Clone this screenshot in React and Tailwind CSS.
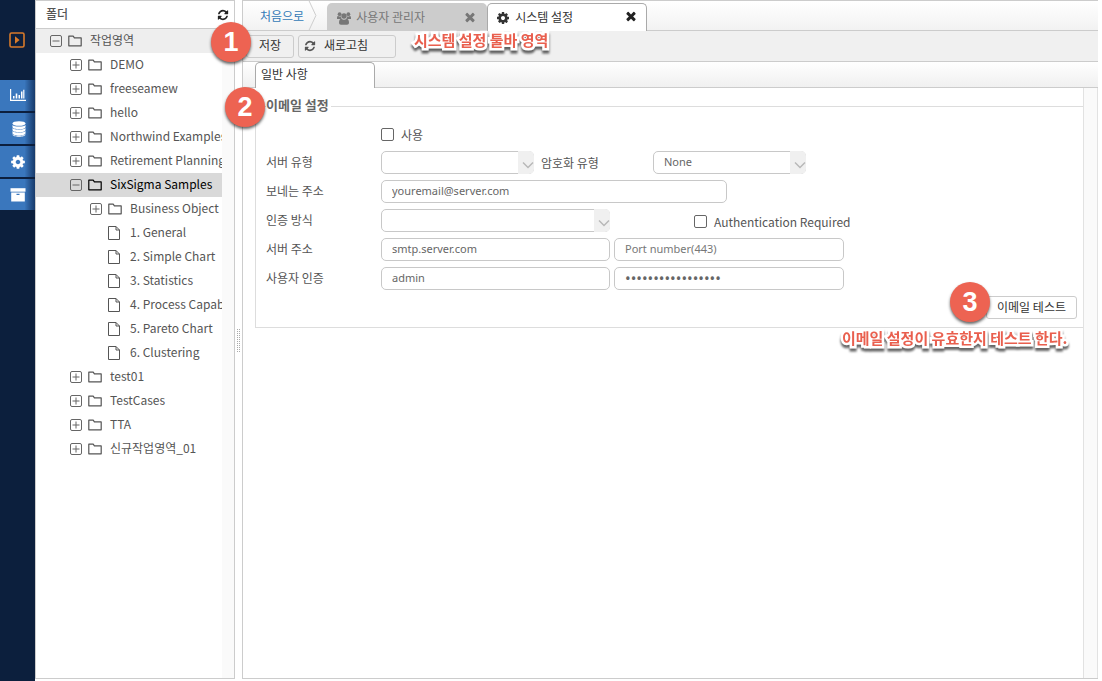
import React from "react";

function RefreshIcon({ className }) {
  return (
    <svg viewBox="0 0 1792 1792" fill="currentColor" className={className} aria-hidden="true">
      <path d="M1639 1056q0 5-1 7-64 268-268 434.5t-478 166.5q-146 0-282.5-55t-243.5-157l-129 129q-19 19-45 19t-45-19-19-45v-448q0-26 19-45t45-19h448q26 0 45 19t19 45-19 45l-137 137q71 66 161 102t187 36q134 0 250-65t186-179q11-17 53-117 8-23 30-23h192q13 0 22.5 9.5t9.5 22.5zm25-800v448q0 26-19 45t-45 19h-448q-26 0-45-19t-19-45 19-45l138-138q-148-137-349-137-134 0-250 65t-186 179q-11 17-53 117-8 23-30 23h-199q-13 0-22.5-9.5t-9.5-22.5v-7q65-268 270-434.5t480-166.5q146 0 284 55.5t245 156.5l130-129q19-19 45-19t45 19 19 45z" />
    </svg>
  );
}

function GearIcon({ className }) {
  return (
    <svg viewBox="-128 0 1792 1792" fill="currentColor" className={className} aria-hidden="true">
      <path d="M1024 896q0-106-75-181t-181-75-181 75-75 181 75 181 181 75 181-75 75-181zm512-109v222q0 12-8 23t-20 13l-185 28q-19 54-39 91 35 50 107 138 10 12 10 25t-9 23q-27 37-99 108t-94 71q-12 0-26-9l-138-108q-44 23-91 38-16 136-29 186-7 28-36 28h-222q-14 0-24.5-8.5t-11.5-21.5l-28-184q-49-16-90-37l-141 107q-10 9-25 9-14 0-25-11-126-114-165-168-7-10-7-23 0-12 8-23 15-21 51-66.5t54-70.5q-27-50-41-99l-183-27q-13-2-21-12.5t-8-23.5v-222q0-12 8-23t19-13l186-28q14-46 39-92-40-57-107-138-10-12-10-24 0-10 9-23 26-36 98.5-107.5t94.5-71.5q13 0 26 10l138 107q44-23 91-38 16-136 29-186 7-28 36-28h222q14 0 24.5 8.5t11.5 21.5l28 184q49 16 90 37l142-107q9-9 24-9 13 0 25 10 129 119 165 170 7 8 7 22 0 12-8 23-15 21-51 66.5t-54 70.5q26 50 41 98l183 28q13 2 21 12.5t8 23.5z" />
    </svg>
  );
}

function CloseIcon() {
  return (
    <svg viewBox="0 0 1792 1792" fill="currentColor" className="size-3.5" aria-hidden="true">
      <path d="M1490 1322q0 40-28 68l-136 136q-28 28-68 28t-68-28l-294-294-294 294q-28 28-68 28t-68-28l-136-136q-28-28-28-68t28-68l294-294-294-294q-28-28-28-68t28-68l136-136q28-28 68-28t68 28l294 294 294-294q28-28 68-28t68 28l136 136q28 28 28 68t-28 68l-294 294 294 294q28 28 28 68z" />
    </svg>
  );
}

function UsersIcon() {
  return (
    <svg viewBox="0 0 14 13" fill="currentColor" className="mt-1 h-[13px] w-3.5" aria-hidden="true">
      <circle cx="2.6" cy="2.2" r="1.900" />
      <circle cx="11.4" cy="2.2" r="1.900" />
      <circle cx="7" cy="4" r="2.700" />
      <path d="M0 7V5.800C0 4.300.800 4 1.300 4c.700.700 1.700.700 2.500.300C3.800 5.600 4.200 6.300 4.800 7zM14 7V5.800C14 4.300 13.200 4 12.700 4c-.700.700-1.700.700-2.500.300C10.200 5.600 9.800 6.300 9.200 7z" />
      <path d="M2 10.600C2 8 3 6.700 4.400 6.700c1.600 1.300 3.600 1.300 5.200 0C11 6.700 12 8 12 10.600c0 1.500-.800 2.200-2 2.200H4c-1.200 0-2-.700-2-2.200z" />
    </svg>
  );
}

function PlayIcon() {
  return (
    <svg viewBox="0 0 16 16" className="mr-px size-4 text-[#d87a2a]" aria-hidden="true">
      <rect x="1" y="1" width="14" height="14" rx="1.5" fill="none" stroke="currentColor" strokeWidth="1.6" />
      <path d="M6 4.2v7.6L10.6 8z" fill="currentColor" />
    </svg>
  );
}

function ChartIcon() {
  return (
    <svg viewBox="0 0 16 14" fill="currentColor" className="mb-0.5 h-3.5 w-4" aria-hidden="true">
      <path d="M0 1h1.2v10.8H16V13H0zM3 8h1.5v2.6H3zM5.700 5.500h1.600v5.100H5.700zM8.500 7h1.500v3.600H8.500zM11 3.500h1.500v7.100H11zM13.200 1.800h1.200v8.800h-1.200z" />
    </svg>
  );
}

function DatabaseIcon() {
  return (
    <svg viewBox="0 0 14 16" fill="currentColor" className="ml-0.5 h-4 w-3.5" aria-hidden="true">
      <ellipse cx="7" cy="2.500" rx="6.500" ry="2.300" />
      <path d="M.5 3.900C2 6.100 12 6.100 13.500 3.900v2.100c0 3-13 3-13 0zM.5 7C2 9.200 12 9.200 13.500 7v2.100c0 3-13 3-13 0zM.5 10.100c1.500 2.200 11.500 2.200 13 0v2.100c0 3-13 3-13 0zM.5 13.200c1.500 2.200 11.500 2.200 13 0v.4c0 3-13 3-13 0z" />
    </svg>
  );
}

function ArchiveIcon() {
  return (
    <svg viewBox="0 0 16 16" fill="currentColor" className="size-4" aria-hidden="true">
      <path d="M.5 1.200h15v3.500H.500z" />
      <path fillRule="evenodd" d="M1.200 5.600h13.600v8.900H1.200zM6.500 6.800v1.100h3V6.800z" />
    </svg>
  );
}

function Expander({ open }) {
  return (
    <svg viewBox="0 0 12 12" fill="none" stroke="#666" className="size-3 shrink-0" aria-hidden="true">
      <rect x="0.5" y="0.5" width="11" height="11" rx="1.500" />
      <path d={open ? "M2.500 6h7" : "M2.500 6h7M6 2.500v7"} />
    </svg>
  );
}

function FolderIcon() {
  return (
    <svg viewBox="0 0 14 12" fill="none" stroke="currentColor" strokeWidth="1.200" className="h-3 w-3.5 shrink-0" aria-hidden="true">
      <path d="M.8 10.800V1.200h4.400l1.200 1.700h6.800v7.900z" strokeLinejoin="round" />
    </svg>
  );
}

function FileIcon() {
  return (
    <svg viewBox="0 0 12 14" fill="none" stroke="#555" className="h-3.5 w-3 shrink-0" aria-hidden="true">
      <path d="M.500.500h7.500l3.500 3.500v9.500H.500zM8 .500V4h3.500" />
    </svg>
  );
}

const tree = [
  { label: "작업영역", level: 0, open: true, shaded: true },
  { label: "DEMO", level: 1 },
  { label: "freeseamew", level: 1 },
  { label: "hello", level: 1 },
  { label: "Northwind Examples", level: 1 },
  { label: "Retirement Planning", level: 1 },
  { label: "SixSigma Samples", level: 1, open: true, selected: true },
  { label: "Business Object", level: 2 },
  { label: "1. General", level: 2, file: true },
  { label: "2. Simple Chart", level: 2, file: true },
  { label: "3. Statistics", level: 2, file: true },
  { label: "4. Process Capab", level: 2, file: true },
  { label: "5. Pareto Chart", level: 2, file: true },
  { label: "6. Clustering", level: 2, file: true },
  { label: "test01", level: 1 },
  { label: "TestCases", level: 1 },
  { label: "TTA", level: 1 },
  { label: "신규작업영역_01", level: 1 },
];

const indents = ["pl-3.5", "pl-[34px]", "pl-[54px]"];

function TreeRow({ item }) {
  const tone = item.selected ? "bg-[#d9d9d9] text-black" : item.shaded ? "bg-[#eee] text-[#555]" : "text-[#555]";
  return (
    <li>
      <button
        type="button"
        className={`flex h-6 w-full items-center gap-1.5 overflow-hidden text-left whitespace-nowrap ${indents[item.level]} ${tone}`}
      >
        {item.file ? <span className="w-3 shrink-0" /> : <Expander open={item.open} />}
        {item.file ? <FileIcon /> : <FolderIcon />}
        <span className={item.file ? "pb-0.5 pl-1" : "pb-0.5 pl-0.5"}>{item.label}</span>
      </button>
    </li>
  );
}

function NavButton({ label, children }) {
  return (
    <button
      type="button"
      aria-label={label}
      className="flex h-[31px] w-full items-center justify-center bg-linear-to-r from-[#3a77bd] from-70% to-[#173a6b] text-white"
    >
      {children}
    </button>
  );
}

const fieldClass =
  "h-[23px] rounded-[5px] border border-[#c8c8c8] bg-white px-2.5 pb-0.5 font-['Noto_Sans','Noto_Sans_CJK_KR',sans-serif] text-[#666] placeholder:text-[#777] placeholder:opacity-100";

function SelectBox({ id, width, value, label }) {
  return (
    <div className={`relative flex ${width}`}>
      <select id={id} aria-label={label} defaultValue={value} className={`${fieldClass} w-full appearance-none text-[11px]`}>
        <option value={value}>{value}</option>
      </select>
      <span className="pointer-events-none absolute inset-y-0 right-0 flex w-4 items-center justify-end rounded-r-[5px] bg-[#f0f0f0]">
        <svg viewBox="0 0 12 8" fill="none" stroke="#b8b8b8" strokeWidth="1.500" className="mt-1 h-2 w-3" aria-hidden="true">
          <path d="M1 1.500l5 5 5-5" />
        </svg>
      </span>
    </div>
  );
}

function Check({ id, label }) {
  return (
    <div className="flex items-center gap-[7px]">
      <input id={id} type="checkbox" className="size-[13px] appearance-none rounded-[2px] border border-[#666] bg-white checked:bg-[#666]" />
      <label htmlFor={id}>{label}</label>
    </div>
  );
}

function FormRow({ id, label, children }) {
  return (
    <div className="flex h-[23px] items-center">
      <label htmlFor={id} className="w-[115px] shrink-0 pb-0.5">
        {label}
      </label>
      {children}
    </div>
  );
}

function Badge({ place, children }) {
  return (
    <span
      className={`absolute flex size-10 items-center justify-center rounded-full bg-[#ed6352] font-['Liberation_Sans',sans-serif] text-[27px] leading-none font-bold text-white shadow-[0_2px_3px_rgba(0,0,0,0.6)] ${place}`}
    >
      {children}
    </span>
  );
}

function Note({ place, children }) {
  return (
    <span
      className={`absolute text-[15px] leading-6 font-bold whitespace-nowrap text-[#e95f4e] drop-shadow-[0_3px_1px_rgba(0,0,0,0.6)] [-webkit-text-stroke:5px_white] [paint-order:stroke_fill] ${place}`}
    >
      {children}
    </span>
  );
}

export default function App() {
  return (
    <div className="relative flex min-h-screen overflow-hidden bg-white font-['Noto_Sans_CJK_KR','Noto_Sans',sans-serif] text-xs leading-5 text-[#555]">
      <nav className="flex w-[35px] shrink-0 flex-col bg-[#0c1f3d]">
        <button type="button" aria-label="실행" className="flex h-20 items-center justify-center">
          <PlayIcon />
        </button>
        <div className="flex flex-col gap-0.5">
          <NavButton label="차트">
            <ChartIcon />
          </NavButton>
          <NavButton label="데이터">
            <DatabaseIcon />
          </NavButton>
          <NavButton label="설정">
            <GearIcon className="size-4" />
          </NavButton>
          <NavButton label="보관함">
            <ArchiveIcon />
          </NavButton>
        </div>
      </nav>

      <aside className="mb-0.5 flex w-[200px] shrink-0 flex-col border border-[#ccc]">
        <header className="flex h-7 items-center justify-between border-b border-[#ccc] pr-[5px] pl-2.5">
          <h2 className="pb-0.5 text-xs font-medium">폴더</h2>
          <button type="button" aria-label="새로고침" className="text-[#222]">
            <RefreshIcon className="size-3" />
          </button>
        </header>
        <div className="flex grow">
          <ul className="min-w-0 grow">
            {tree.map((item) => (
              <TreeRow key={item.label} item={item} />
            ))}
          </ul>
          <div className="w-3 shrink-0 bg-[#fafafa]" />
        </div>
      </aside>

      <div className="flex w-[7px] shrink-0 items-center justify-center">
        <svg viewBox="0 0 4 24" className="h-6 w-1" aria-hidden="true">
          <path d="M.5 0v24M2.500 0v24" stroke="#aaa" strokeDasharray="1 1" />
        </svg>
      </div>

      <main className="mr-1 mb-0.5 flex min-w-0 grow flex-col border border-r-0 border-[#ccc]">
        <div className="flex h-[30px] items-end border-b border-[#ccc] bg-linear-to-b from-white to-[#f2f2f2]">
          <a href="#home" className="flex h-full items-center pl-[17px] text-[#337ab7]">
            처음으로
          </a>
          <svg viewBox="0 0 10 30" fill="none" stroke="#ccc" className="ml-1 h-[29px] w-2.5" aria-hidden="true">
            <path d="M1 0l7 15-7 15" />
          </svg>
          <div className="ml-[9px] flex h-[27px] w-40 items-center rounded-t-[5px] bg-[#ccc] px-2.5 text-[#777]">
            <UsersIcon />
            <button type="button" className="grow pl-[5px] text-left">
              사용자 관리자
            </button>
            <button type="button" aria-label="사용자 관리자 닫기">
              <CloseIcon />
            </button>
          </div>
          <div className="-mb-px flex h-7 w-[160px] items-center rounded-t-[5px] border border-b-0 border-[#aaa] bg-white px-2 text-[#333]">
            <GearIcon className="size-3.5" />
            <button type="button" className="grow pb-0.5 pl-[5px] text-left">
              시스템 설정
            </button>
            <button type="button" aria-label="시스템 설정 닫기" className="pb-1 text-[#222]">
              <CloseIcon />
            </button>
          </div>
        </div>

        <div className="flex h-[31px] items-center gap-1 border-b border-[#ccc] bg-[#f0f0f0] pl-[3px] text-[#333]">
          <button type="button" className="flex h-[23px] w-12 items-center rounded-[3px] border border-[#ccc] pb-0.5 pl-3">
            저장
          </button>
          <button type="button" className="flex h-[23px] w-[98px] items-center gap-2 rounded-[3px] border border-[#ccc] pl-[5px]">
            <RefreshIcon className="size-3 text-[#555]" />
            <span className="pb-0.5">새로고침</span>
          </button>
        </div>

        <div className="flex h-[26px] items-end border-b border-[#ccc] bg-linear-to-b from-white to-[#f0f0f0] pl-3">
          <button
            type="button"
            className="-mb-px h-[26px] w-[120px] rounded-t-[5px] border border-b-0 border-[#aaa] bg-white pb-1 pl-[5px] text-left text-[#333]"
          >
            일반 사항
          </button>
        </div>

        <div className="flex grow">
          <form className="min-w-0 grow pt-1.5 pl-3" onSubmit={(e) => e.preventDefault()}>
            <fieldset className="flex flex-col gap-1.5 border border-r-0 border-[#ddd] pt-1 pr-1.5 pb-2 pl-2.5">
              <legend className="pr-0.5 pb-0.5 text-[13px] leading-[22px] font-bold text-[#666]">이메일 설정</legend>
              <div className="flex h-[23px] items-center pt-0.5 pl-[115px]">
                <Check id="use" label="사용" />
              </div>
              <FormRow id="server-type" label="서버 유형">
                <SelectBox id="server-type" width="w-[153px]" value="" />
                <label htmlFor="crypt-type" className="w-[119px] pl-[7px]">
                  암호화 유형
                </label>
                <SelectBox id="crypt-type" width="w-[153px]" value="None" />
              </FormRow>
              <FormRow id="sender" label="보네는 주소">
                <input id="sender" type="text" defaultValue="youremail@server.com" className={`${fieldClass} w-[346px] text-[11px]`} />
              </FormRow>
              <FormRow id="auth-type" label="인증 방식">
                <SelectBox id="auth-type" width="w-[229px]" value="" />
                <div className="pt-0.5 pl-[84px]">
                  <Check id="auth-required" label="Authentication Required" />
                </div>
              </FormRow>
              <FormRow id="host" label="서버 주소">
                <input id="host" type="text" defaultValue="smtp.server.com" className={`${fieldClass} w-[229px] text-[11px]`} />
                <input type="text" aria-label="포트" placeholder="Port number(443)" className={`${fieldClass} ml-1 w-[230px] text-[11px]`} />
              </FormRow>
              <FormRow id="user" label="사용자 인증">
                <input id="user" type="text" defaultValue="admin" className={`${fieldClass} w-[229px] text-[11px]`} />
                <input type="password" aria-label="비밀번호" defaultValue="12345678901234567" className={`${fieldClass} ml-1 w-[230px] text-[15px]`} />
              </FormRow>
              <button type="submit" className="h-[23px] w-[91px] self-end rounded-[3px] border border-[#ccc] pb-0.5 text-[#333]">
                이메일 테스트
              </button>
            </fieldset>
          </form>
          <div className="w-[15px] shrink-0 border-x border-[#e2e2e2] bg-[#fafafa]" />
        </div>
      </main>

      <Badge place="top-[22px] left-[211px]">1</Badge>
      <Badge place="top-[87px] left-[225px]">2</Badge>
      <Badge place="top-[282px] left-[950px]">3</Badge>
      <Note place="top-[28px] left-[414px]">시스템 설정 툴바 영역</Note>
      <Note place="top-[326px] left-[842px]">이메일 설정이 유효한지 테스트 한다.</Note>
    </div>
  );
}
